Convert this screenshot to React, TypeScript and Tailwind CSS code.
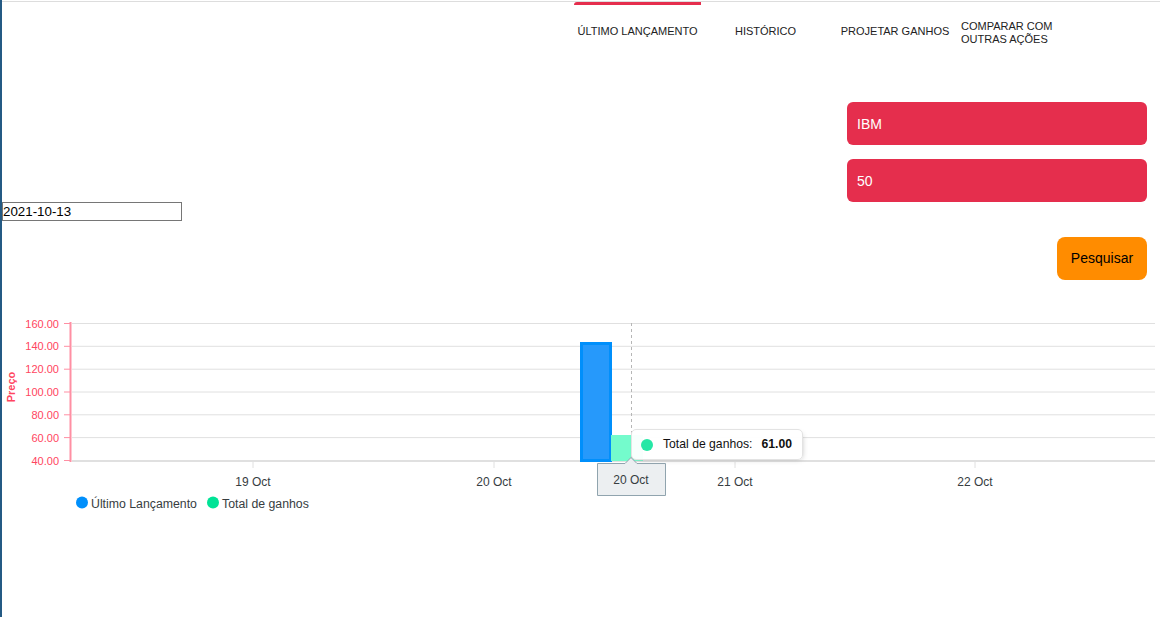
import React from 'react'

const tabs = [
  { label: 'ÚLTIMO LANÇAMENTO', width: 'w-[127px]', active: true },
  { label: 'HISTÓRICO', width: 'w-[129px]', active: false },
  { label: 'PROJETAR GANHOS', width: 'w-[130px]', active: false },
]

const yTicks = [
  { label: '160.00', y: 324.5 },
  { label: '140.00', y: 347.3 },
  { label: '120.00', y: 370.2 },
  { label: '100.00', y: 393 },
  { label: '80.00', y: 415.8 },
  { label: '60.00', y: 438.6 },
  { label: '40.00', y: 461.5 },
]

const xTicks = [
  { label: '19 Oct', x: 253 },
  { label: '20 Oct', x: 494 },
  { label: '21 Oct', x: 735 },
  { label: '22 Oct', x: 975 },
]

function PriceChart() {
  return (
    <div className="relative mt-[19px] h-[220px] w-[1158px]">
      <svg width="1158" height="220" viewBox="2 300 1158 220" className="block" fontFamily="'Liberation Sans', Arial, sans-serif">
        {/* grid */}
        {yTicks.map((t) => (
          <line key={t.label} x1="72" x2="1155" y1={t.y} y2={t.y} stroke="#e0e0e0" strokeWidth="1" />
        ))}
        <line x1="72" x2="1155" y1="462" y2="462" stroke="#e0e0e0" strokeWidth="2" />

        {/* y axis */}
        <line x1="70.5" x2="70.5" y1="323" y2="463" stroke="#ff8fa3" strokeWidth="2" />
        {yTicks.map((t) => (
          <g key={`l-${t.label}`}>
            <line x1="64" x2="70" y1={t.y} y2={t.y} stroke="#ff8fa3" strokeWidth="1" />
            <text x="59" y={t.y + 4} textAnchor="end" fontSize="11" fill="#ff4560">
              {t.label}
            </text>
          </g>
        ))}
        <text x="15" y="388" transform="rotate(-90 15 388)" textAnchor="middle" fontSize="11" fontWeight="bold" fill="#ff4560">
          Preço
        </text>

        {/* x axis */}
        {xTicks.map((t) => (
          <g key={t.label}>
            <line x1={t.x} x2={t.x} y1="463" y2="469" stroke="#e0e0e0" strokeWidth="1" />
            <text x={t.x} y="486.5" textAnchor="middle" fontSize="12" fill="#373d3f">
              {t.label}
            </text>
          </g>
        ))}

        {/* bars */}
        <rect x="581.5" y="344.5" width="29" height="117" fill="#2699fb" stroke="#008ffb" strokeWidth="3" />
        <rect x="611" y="436" width="32" height="26" fill="#74fbcc" />

        {/* crosshair */}
        <line x1="631.5" x2="631.5" y1="324" y2="462" stroke="#b6b6b6" strokeWidth="1" strokeDasharray="3 3" />

        {/* x tooltip */}
        <path d="M597.5 464.5 H625 L631 458.5 L637 464.5 H665.5 V496.5 H597.5 Z" fill="#eceff1" stroke="#90a4ae" strokeWidth="1" />
        <text x="631" y="485" textAnchor="middle" fontSize="12" fill="#373d3f">
          20 Oct
        </text>

        {/* legend */}
        <circle cx="82" cy="503.5" r="6" fill="#008ffb" />
        <text x="91" y="508.5" fontSize="12.3" fill="#373d3f">
          Último Lançamento
        </text>
        <circle cx="213" cy="503.5" r="6" fill="#00e396" />
        <text x="222" y="508.5" fontSize="12.3" fill="#373d3f">
          Total de ganhos
        </text>
      </svg>

      <div className="absolute left-[629px] top-[130px] flex h-[31px] w-[172px] items-center rounded-[5px] border border-[#e3e3e3] bg-white/95 pl-[9px] text-[12.2px] text-[#111] shadow-[2px_2px_6px_-4px_#999]">
        <span className="h-[12px] w-[12px] rounded-full bg-[#26e7a6]" />
        <span className="ml-[10px]">Total de ganhos:</span>
        <span className="ml-[9px] font-bold">61.00</span>
      </div>
    </div>
  )
}

export default function App() {
  return (
    <div className="min-h-screen border-l-2 border-[#245a84] bg-white font-['Liberation_Sans',Arial,sans-serif] text-black">
      <header className="pt-px">
        <div className="border-t border-[#dddddd]">
          <nav className="ml-[572px] flex">
            {tabs.map((tab) => (
              <div key={tab.label} className={`${tab.width} flex flex-col`}>
                <div className={`h-[3px] ${tab.active ? 'rounded-tl-[3px] bg-[#e52e4d]' : ''}`} />
                <div className="flex h-[52px] items-center justify-center text-[11px] text-[#222]">{tab.label}</div>
              </div>
            ))}
            <div className="flex w-[100px] flex-col">
              <div className="h-[3px]" />
              <div className="flex h-[52px] items-center pl-px pt-[3px] text-[11px] leading-[13px] text-[#222]">
                COMPARAR COM
                <br />
                OUTRAS AÇÕES
              </div>
            </div>
          </nav>
        </div>
      </header>

      <section className="mt-[45px] flex justify-end pr-[13px]">
        <div className="flex w-[300px] flex-col gap-[14px]">
          <input
            type="text"
            defaultValue="IBM"
            className="h-[43px] rounded-[6px] bg-[#e52e4d] px-[10px] text-[14px] text-white outline-none"
          />
          <input
            type="text"
            defaultValue="50"
            className="h-[43px] rounded-[6px] bg-[#e52e4d] px-[10px] text-[14px] text-white outline-none"
          />
        </div>
      </section>

      <input
        type="text"
        defaultValue="2021-10-13"
        className="block h-[19px] w-[180px] border border-[#767676] px-0 text-[13.33px] text-black outline-none"
      />

      <div className="mt-[16px] flex justify-end pr-[13px]">
        <button type="button" className="h-[43px] w-[90px] rounded-[8px] bg-[#ff8c00] text-[14px] text-black">
          Pesquisar
        </button>
      </div>

      <PriceChart />
    </div>
  )
}
